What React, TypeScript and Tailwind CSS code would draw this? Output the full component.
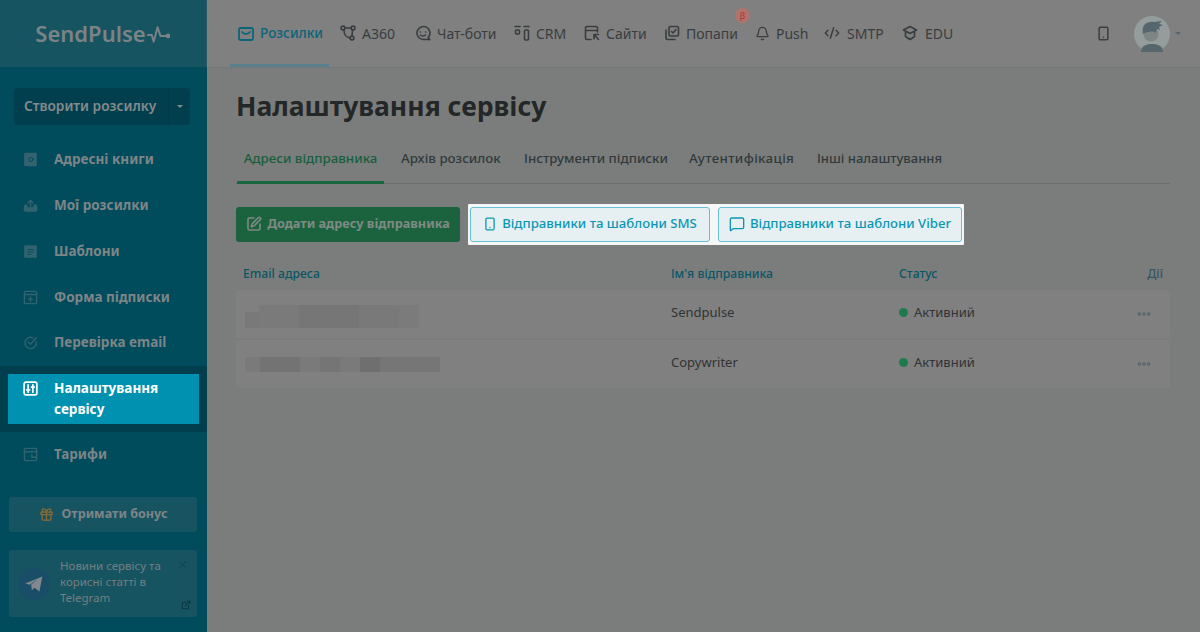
import { Bell, CodeXml, Ellipsis, Smartphone, X, MessageSquare, Gift, SquarePen, ExternalLink } from "lucide-react";

const FONT = "font-['Noto_Sans','Liberation_Sans',sans-serif]";

function Ic({ children, className = "", sw = 1.5 }: { children: React.ReactNode; className?: string; sw?: number }) {
  return (
    <svg viewBox="0 0 16 16" fill="none" stroke="currentColor" strokeWidth={sw} strokeLinecap="round" strokeLinejoin="round" className={className}>
      {children}
    </svg>
  );
}

const topNav = [
  { label: "A360", w: "w-[75px]", icon: <><circle cx="3" cy="3" r="1.900" /><circle cx="13" cy="3" r="1.900" /><circle cx="12" cy="13" r="1.900" /><path d="M5 3h6M4 5v1c0 4 3 6.500 6 7M12.500 5l-.5 6" /></> },
  { label: "Чат-боти", w: "w-[99px]", icon: <><path d="M14.800 14.800 13.200 12.500A6.500 6.500 0 1 0 8 14.500h6.800z" /><path d="M5.300 7h.1M10.700 7h.1M5.500 10c1.300 1.200 3.700 1.200 5 0" /></> },
  { label: "CRM", w: "w-[70px]", icon: <><path d="M1 1.500h5M10 1.500h5" /><rect x="1.500" y="5" width="4" height="4" rx="1" /><rect x="10.500" y="5" width="4" height="10" rx="1" /></> },
  { label: "Сайти", w: "w-[80px]", icon: <><path d="M7 14.500H3A1.500 1.500 0 0 1 1.500 13V3A1.500 1.500 0 0 1 3 1.500h9A1.500 1.500 0 0 1 13.500 3v4M1.500 5.500h12" /><path d="M14.500 9.500h-4.500v4.500M10 9.500l4.500 5" /></> },
  { label: "Попапи", w: "w-[91px]", icon: <><rect x="5" y="1.500" width="9.500" height="9.500" rx="1.500" /><path d="M7.500 6.500 9 8l3-3.500M2 5v8a1.500 1.500 0 0 0 1.500 1.500H11" /></> },
];

const sideNav = [
  { label: "Адресні книги", h: "h-[46px]", icon: <><rect x="2" y="1.500" width="12" height="13" fill="currentColor" /><circle cx="8.500" cy="8" r="2.200" stroke="#004b5c" strokeWidth="1" /></> },
  { label: "Мої розсилки", h: "h-[46px]", icon: <><path d="M1.500 10c0-1.500 1-2.500 2.500-2.500v3h8v-3c1.500 0 2.500 1 2.500 2.500v2.500a1.500 1.500 0 0 1-1.500 1.500H3a1.500 1.500 0 0 1-1.500-1.500z" fill="currentColor" /><path d="M8 9V2.500M5.500 5 8 2.500 10.500 5" /></> },
  { label: "Шаблони", h: "h-[46px]", icon: <><rect x="2" y="2" width="12" height="12" fill="currentColor" strokeDasharray="1.500 1" /><path d="M5 6h6M5 8.500h6M5 11h3" stroke="#004b5c" strokeWidth="1" /></> },
  { label: "Форма підписки", h: "h-[46px]", icon: <><rect x="1.500" y="1.500" width="13" height="13" rx="1.500" /><path d="M1.500 4.800h13M8 7.500v4.500M5.800 9.700h4.400" /></> },
  { label: "Перевірка email", h: "h-[44px]", icon: <><path d="M14 7.500A6 6 0 1 1 10.500 3" /><path d="m5.500 7.500 2.500 2.500 6-7" /></> },
];

export default function App() {
  return (
    <div className={`flex h-[632px] w-[1200px] overflow-hidden bg-[#7b7d7c] ${FONT}`}>
      <aside className="flex w-[207px] shrink-0 flex-col bg-[#004b5c]">
        <div className="flex h-[67px] items-center justify-center gap-[1px] bg-[#175461] pr-[2px]">
          <span className="text-[22px] font-semibold text-[#7b8386]">SendPulse</span>
          <svg viewBox="0 0 24 20" className="h-[20px] w-[23px] text-[#7b8386]" fill="none" stroke="currentColor" strokeWidth="2" strokeLinecap="round" strokeLinejoin="round">
            <path d="M1 11h4l2 7 4-15 3 9h6" />
            <circle cx="22" cy="12" r="1.500" fill="currentColor" />
          </svg>
        </div>

        <div className="mx-[14px] mt-[21px] flex h-[37px] w-[176px] rounded-[4px] bg-[#023f4e]">
          <div className="flex flex-1 items-center pb-[1px] pl-[10px] text-[13.700px] font-semibold text-[#848a8b]">Створити розсилку</div>
          <div className="flex w-[22px] items-center justify-center border-l border-[#033a47]">
            <div className="h-0 w-0 border-x-[3.500px] border-t-[3px] border-x-transparent border-t-[#848a8b]" />
          </div>
        </div>

        <nav className="mt-[11px] flex flex-col">
          {sideNav.map((item) => (
            <div key={item.label} className={`flex items-center ${item.h} pl-[23px]`}>
              <Ic className="h-[15px] w-[15px] text-[#33636f]">{item.icon}</Ic>
              <span className="ml-[16px] text-[13.500px] font-bold text-[#7d8587]">{item.label}</span>
            </div>
          ))}
          <div className="mt-[2px] bg-[#023f4e] py-[8px]">
            <div className="ml-[8px] flex h-[50px] w-[191px] bg-[#0091b0] pl-[15px] pt-[4px]">
              <Ic className="mt-[3px] h-[15px] w-[15px] text-white" sw={1.800}>
                <rect x="1.200" y="1.200" width="13.600" height="13.600" rx="2" />
                <path d="M5.500 4v8M10.500 4v8M4 9.500h3M9 6.500h3" />
              </Ic>
              <span className="ml-[16px] text-[13.500px] font-bold leading-[21px] text-white">
                Налаштування
                <br />
                сервісу
              </span>
            </div>
          </div>
          <div className="flex h-[44px] items-center pl-[23px]">
            <Ic className="h-[15px] w-[15px] text-[#33636f]">
              <path d="M14.500 5V3A1.500 1.500 0 0 0 13 1.500H3A1.500 1.500 0 0 0 1.500 3v10A1.500 1.500 0 0 0 3 14.500h10a1.500 1.500 0 0 0 1.500-1.500v-2" />
              <path d="M1.500 5h13v6H9.500V8" />
            </Ic>
            <span className="ml-[16px] text-[13.500px] font-bold text-[#7d8587]">Тарифи</span>
          </div>
        </nav>

        <div className="mx-[9px] mt-[21px] flex h-[35px] w-[188px] items-center justify-center rounded-[3px] bg-[#175461] pb-[1px] pl-[1px]">
          <Gift className="h-[15px] w-[15px] text-[#8a6b38]" strokeWidth={2} />
          <span className="ml-[7px] text-[12.600px] font-bold text-[#7d8587]">Отримати бонус</span>
        </div>

        <div className="relative mx-[9px] mt-[18px] flex h-[67px] w-[188px] items-center rounded-[3px] bg-[#175461] pl-[9px]">
          <div className="flex h-[32px] w-[32px] shrink-0 items-center justify-center rounded-full bg-[#1a4e68]">
            <svg viewBox="0 0 24 24" className="h-[20px] w-[20px] text-[#80898c]" fill="currentColor">
              <path d="M1.500 11.500 22 3l-3.500 18-6-4.500-3 3-1-6.500 9-8L7 13z" />
            </svg>
          </div>
          <p className="mb-[4px] ml-[10px] text-[11.500px] leading-[16px] text-[#757f82]">
            Новини сервісу та
            <br />
            корисні статті в
            <br />
            Telegram
          </p>
          <X className="absolute right-[9px] top-[9px] h-[11px] w-[11px] text-[#0c3f4c]" strokeWidth={2} />
          <ExternalLink className="absolute bottom-[7px] right-[6px] h-[10px] w-[10px] text-[#0c3440]" strokeWidth={2.5} />
        </div>
      </aside>

      <div className="w-[993px]">
        <header className="flex h-[67px] items-stretch justify-between bg-[#808080] pl-[23px] pr-[19px] shadow-[0_1px_1px_#767776]">
          <nav className="flex items-stretch text-[14px] text-[#393d3f]">
            <div className="mr-[11px] flex w-[99px] items-center gap-[6px] border-b-[3px] border-[#59808a] pl-[8px] pt-[3px] text-[13.600px] font-medium text-[#0b6478]">
              <Ic className="h-[16px] w-[16px]" sw={1.800}>
                <rect x="1" y="2" width="14" height="12" rx="1.500" />
                <path d="M4 6c2 2.500 6 2.500 8 0" />
              </Ic>
              Розсилки
            </div>
            {topNav.map((item) => (
              <div key={item.label} className={`relative flex ${item.w} items-center gap-[6px] pb-[1px]`}>
                <Ic className="h-[16px] w-[16px] shrink-0" sw={1.600}>{item.icon}</Ic>
                {item.label}
                {item.label === "Попапи" && (
                  <span className="absolute left-[71px] top-[8px] flex h-[15px] w-[15px] items-center justify-center rounded-full bg-[#b0736d] text-[9px] text-[#b2342a]">β</span>
                )}
              </div>
            ))}
            <div className="flex w-[69px] items-center gap-[6px] pb-[1px]">
              <Bell className="h-[15px] w-[15px]" strokeWidth={2} />
              Push
            </div>
            <div className="flex w-[78px] items-center gap-[7px] pb-[1px]">
              <CodeXml className="h-[16px] w-[16px]" strokeWidth={2.2} />
              SMTP
            </div>
            <div className="flex items-center gap-[7px] pb-[1px]">
              <Ic className="h-[16px] w-[16px]" sw={1.700}>
                <path d="M8 1.500 14.500 5 8 8.500 1.500 5zM3.500 7v4.500L8 14.500l4.500-3V7" />
              </Ic>
              EDU
            </div>
          </nav>
          <div className="flex items-center">
            <Smartphone className="mr-[23px] h-[15px] w-[15px] text-[#393d3f]" strokeWidth={2.4} />
            <svg viewBox="0 0 36 36" className="h-[36px] w-[36px]">
              <circle cx="18" cy="18" r="18" fill="#949c9c" />
              <path d="M7 36c0-6 5-8 11-8s11 2 11 8z" fill="#56666e" />
              <circle cx="17" cy="18" r="7.500" fill="#7d8585" />
              <path d="M9 18C7 9 13 5 20 6l8-1-3 3 4 1-4 2 1 3-3-1c-1 2-1 3-2 4-1-3-9-1-12 1z" fill="#56666e" />
            </svg>
            <div className="ml-[5px] h-0 w-0 border-x-[3.500px] border-t-[3px] border-x-transparent border-t-[#56666e]" />
          </div>
        </header>

        <main className="pl-[29px] pr-[30px]">
          <h1 className="mt-[20px] text-[26.500px] font-bold leading-[38px] text-[#232728]">Налаштування сервісу</h1>

          <div className="mt-[21px] flex h-[38px] border-b border-[#6d6f6e] text-[13.300px] font-medium text-[#303a3c]">
            <div className="-mb-[1px] ml-[1px] flex w-[147px] items-center justify-center border-b-[3px] border-[#19673f] pb-[9px] text-[#175f3c]">Адреси відправника</div>
            <div className="ml-[17px] flex w-[123px] items-center pb-[12px]">Архів розсилок</div>
            <div className="flex w-[165px] items-center pb-[12px]">Інструменти підписки</div>
            <div className="flex w-[128px] items-center pb-[12px] tracking-[0.35px]">Аутентифікація</div>
            <div className="flex items-center pb-[12px] text-[13px]">Інші налаштування</div>
          </div>

          <div className="mt-[23px] flex h-[35px] items-center">
            <div className="flex h-[35px] w-[224px] items-center justify-center rounded-[3px] bg-[#1b633e] pb-[1px] text-[12.700px] font-bold text-[#7f8a85]">
              <SquarePen className="mr-[5px] h-[16px] w-[16px]" strokeWidth={2.400} />
              Додати адресу відправника
            </div>
            <div className="ml-[8px] flex h-[41px] items-center gap-[8px] rounded-[1px] bg-[#f4f6f7] px-[2px]">
              <div className="flex h-[35px] w-[240px] items-center justify-center gap-[5px] rounded-[3px] border border-[#66bfd3] bg-[#e6f0f2] pb-[1px] text-[13.200px] font-medium text-[#0b97b4]">
                <Smartphone className="h-[16px] w-[14px]" strokeWidth={2.2} />
                Відправники та шаблони SMS
              </div>
              <div className="flex h-[35px] w-[244px] items-center justify-center gap-[5px] rounded-[3px] border border-[#66bfd3] bg-[#e6f0f2] pb-[1px] text-[13.200px] font-medium text-[#0b97b4]">
                <MessageSquare className="h-[16px] w-[16px]" strokeWidth={2} />
                Відправники та шаблони Viber
              </div>
            </div>
          </div>

          <div className="mt-[23px] grid h-[25px] grid-cols-[428px_228px_1fr_auto] pl-[7px] pr-[7px] text-[12.200px] font-medium text-[#0b5666]">
            <div>Email адреса</div>
            <div>Ім'я відправника</div>
            <div>Статус</div>
            <div className="text-[#39555d]">Дії</div>
          </div>

          <div className="flex flex-col gap-[2px]">
            <Row name="Sendpulse" blur={<Blur1 />} />
            <Row name="Copywriter" blur={<Blur2 />} />
          </div>
        </main>
      </div>
    </div>
  );
}

function Row({ name, blur }: { name: string; blur: React.ReactNode }) {
  return (
    <div className="grid h-[48px] grid-cols-[435px_228px_1fr_auto] items-center rounded-[3px] bg-[#808080] pr-[18px] text-[13px] text-[#313335]">
      <div className="pl-[9px]">{blur}</div>
      <div className="pb-[3px]">{name}</div>
      <div className="flex items-center gap-[6px] pb-[3px]">
        <span className="h-[9px] w-[9px] rounded-full bg-[#1f7b4e]" />
        Активний
      </div>
      <Ellipsis className="h-[16px] w-[16px] text-[#56666f]" strokeWidth={3.5} />
    </div>
  );
}

function Blur1() {
  return (
    <div className="mt-[5px] flex h-[23px] w-[174px] items-end">
      <div className="h-[16px] w-[14px] bg-[#797979]" />
      <div className="h-[23px] w-[40px] bg-[#7a7a7a]" />
      <div className="h-[23px] w-[60px] bg-[#767676]" />
      <div className="h-[23px] w-[40px] bg-[#797979]" />
      <div className="h-[23px] w-[20px] bg-[#7b7b7b]" />
    </div>
  );
}

function Blur2() {
  return (
    <div className="flex h-[15px] w-[195px] bg-[#767676]">
      <div className="w-[15px] bg-[#7a7a7a]" />
      <div className="w-[40px] bg-[#737373]" />
      <div className="w-[20px] bg-[#7a7a7a]" />
      <div className="w-[20px] bg-[#757575]" />
      <div className="w-[20px] bg-[#7a7a7a]" />
      <div className="w-[20px] bg-[#6f6f6f]" />
    </div>
  );
}
